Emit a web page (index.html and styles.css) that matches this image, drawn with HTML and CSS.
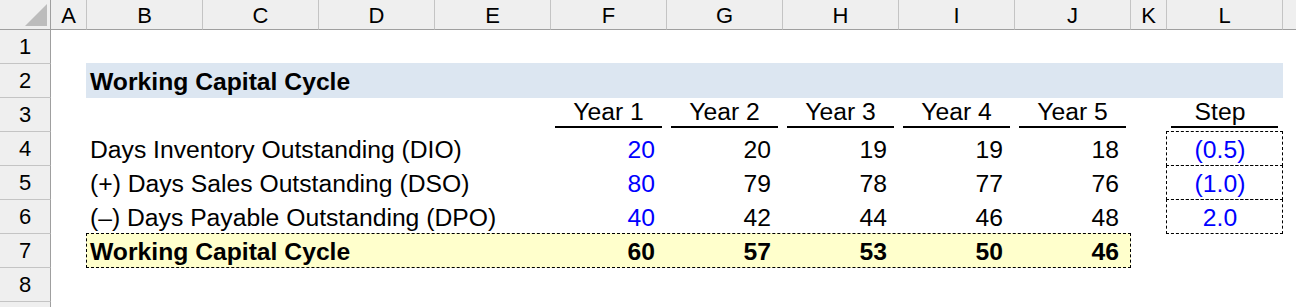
FILE: index.html
```html
<!DOCTYPE html>
<html>
<head>
<meta charset="utf-8">
<title>Working Capital Cycle</title>
<link rel="stylesheet" href="styles.css">
</head>
<body>
<div class="sheet">
  <div class="corner"><svg width="50" height="29" viewBox="0 0 50 29"><polygon points="47,4 47,26 25,26" fill="#bcbcbc"/></svg></div>
  <div class="ch">A</div>
  <div class="ch">B</div>
  <div class="ch">C</div>
  <div class="ch">D</div>
  <div class="ch">E</div>
  <div class="ch">F</div>
  <div class="ch">G</div>
  <div class="ch">H</div>
  <div class="ch">I</div>
  <div class="ch">J</div>
  <div class="ch">K</div>
  <div class="ch">L</div>
  <div class="ch ch-last"></div>

  <div class="rh r1">1</div>
  <div class="rh r2">2</div>
  <div class="rh r3">3</div>
  <div class="rh r4">4</div>
  <div class="rh r5">5</div>
  <div class="rh r6">6</div>
  <div class="rh r7">7</div>
  <div class="rh r8">8</div>
  <div class="rh r9"></div>

  <div class="band-title r2"></div>
  <div class="band-total r7"></div>
  <div class="stepbox r4"></div>
  <div class="stepbox r5"></div>
  <div class="stepbox r6"></div>

  <div class="cell label bold r2">Working Capital Cycle</div>

  <div class="yr c-f r3"><div class="ul">Year 1</div></div>
  <div class="yr c-g r3"><div class="ul">Year 2</div></div>
  <div class="yr c-h r3"><div class="ul">Year 3</div></div>
  <div class="yr c-i r3"><div class="ul">Year 4</div></div>
  <div class="yr c-j r3"><div class="ul">Year 5</div></div>
  <div class="yr c-l r3"><div class="ul step-ul">Step</div></div>

  <div class="cell label r4">Days Inventory Outstanding (DIO)</div>
  <div class="cell num input c-f r4">20</div>
  <div class="cell num c-g r4">20</div>
  <div class="cell num c-h r4">19</div>
  <div class="cell num c-i r4">19</div>
  <div class="cell num c-j r4">18</div>
  <div class="cell step input c-l r4">(0.5)</div>

  <div class="cell label r5">(+) Days Sales Outstanding (DSO)</div>
  <div class="cell num input c-f r5">80</div>
  <div class="cell num c-g r5">79</div>
  <div class="cell num c-h r5">78</div>
  <div class="cell num c-i r5">77</div>
  <div class="cell num c-j r5">76</div>
  <div class="cell step input c-l r5">(1.0)</div>

  <div class="cell label r6">(–) Days Payable Outstanding (DPO)</div>
  <div class="cell num input c-f r6">40</div>
  <div class="cell num c-g r6">42</div>
  <div class="cell num c-h r6">44</div>
  <div class="cell num c-i r6">46</div>
  <div class="cell num c-j r6">48</div>
  <div class="cell step input c-l r6">2.0</div>

  <div class="cell label bold r7">Working Capital Cycle</div>
  <div class="cell num bold c-f r7">60</div>
  <div class="cell num bold c-g r7">57</div>
  <div class="cell num bold c-h r7">53</div>
  <div class="cell num bold c-i r7">50</div>
  <div class="cell num bold c-j r7">46</div>
</div>
</body>
</html>
```
FILE: styles.css
```css
html, body {
  margin: 0;
  padding: 0;
  background: #ffffff;
}

body {
  font-family: "Liberation Sans", Arial, sans-serif;
  color: #000000;
}

.sheet {
  display: grid;
  grid-template-columns: 51px 36px repeat(9, 116px) 36px 116px 1fr;
  grid-template-rows: 30px repeat(9, 34px);
  width: 1296px;
  height: 307px;
  overflow: hidden;
}

.corner {
  grid-row: 1;
  grid-column: 1;
  background: #efefef;
  border-right: 1px solid #9f9f9f;
  border-bottom: 1px solid #9f9f9f;
  box-sizing: border-box;
}

.corner svg {
  display: block;
}

.ch {
  grid-row: 1;
  background: #efefef;
  border-right: 1px solid #c4c4c4;
  border-bottom: 1px solid #9f9f9f;
  box-sizing: border-box;
  display: flex;
  align-items: center;
  justify-content: center;
  padding-top: 2px;
  font-size: 22px;
  line-height: 24px;
}

.ch-last {
  border-right: none;
}

.rh {
  grid-column: 1;
  background: #efefef;
  border-right: 1px solid #9f9f9f;
  border-bottom: 1px solid #c4c4c4;
  box-sizing: border-box;
  display: flex;
  align-items: center;
  justify-content: center;
  font-size: 22px;
  line-height: 24px;
}

.r1 { grid-row: 2; }
.r2 { grid-row: 3; }
.r3 { grid-row: 4; }
.r4 { grid-row: 5; }
.r5 { grid-row: 6; }
.r6 { grid-row: 7; }
.r7 { grid-row: 8; }
.r8 { grid-row: 9; }
.r9 { grid-row: 10; }

.c-f { grid-column: 7; }
.c-g { grid-column: 8; }
.c-h { grid-column: 9; }
.c-i { grid-column: 10; }
.c-j { grid-column: 11; }
.c-l { grid-column: 13; }

.band-title {
  grid-column: 3 / 14;
  background: #dce6f1;
  margin: -1px 0 0 -1px;
}

.band-total {
  grid-column: 3 / 12;
  background: #ffffcc;
  border: 1px dashed #000000;
  margin: -1px 0 0 -1px;
}

.stepbox {
  grid-column: 13;
  border: 1px dashed #000000;
  margin: -1px 0 0 -1px;
}

.cell {
  display: flex;
  align-items: flex-end;
  font-size: 24.7px;
  line-height: 28px;
  padding-bottom: 2.5px;
  white-space: nowrap;
  box-sizing: border-box;
}

.label {
  grid-column: 3 / 7;
  padding-left: 3px;
}

.bold {
  font-weight: bold;
}

.num {
  justify-content: flex-end;
  padding-right: 12px;
}

.step {
  justify-content: center;
  padding-right: 10px;
}

.input {
  color: #0000ff;
}

.yr {
  display: flex;
  align-items: flex-end;
}

.ul {
  flex: 1;
  margin: 0 5px 4px 4px;
  border-bottom: 2px solid #000000;
  text-align: center;
  font-size: 24.7px;
  line-height: 28px;
  white-space: nowrap;
}

.step-ul {
  padding-right: 9px;
}
```
